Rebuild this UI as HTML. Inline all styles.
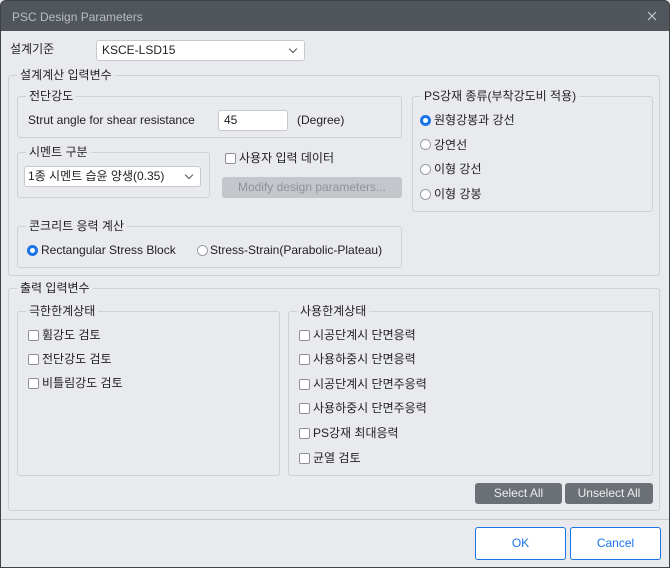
<!DOCTYPE html>
<html><head><meta charset="utf-8"><style>
*{box-sizing:border-box;margin:0;padding:0}
body{width:670px;height:568px;overflow:hidden;background:#e9eaed;font-family:"Liberation Sans","Noto Sans CJK KR",sans-serif;font-size:12px;color:#222;position:relative}
.a{position:absolute}
.win{position:absolute;left:0;top:0;width:670px;height:568px;border:1px solid #3d4247;border-radius:6px 6px 0 0}
.title{left:0;top:0;width:670px;height:31px;background:#50565c;border-radius:6px 6px 0 0}
.g{position:absolute;border:1px solid #cfd1d5;border-radius:3px}
.lg{position:absolute;top:-9px;left:8px;background:#e9eaed;padding:0 3px;line-height:16px;white-space:nowrap}
.sel{position:absolute;background:#fff;border:1px solid #c5c8cc;border-radius:3px;padding-left:5px;line-height:19px}
.sel.dd:after{content:"";position:absolute;right:8px;top:5px;width:5px;height:5px;border-right:1.5px solid #555;border-bottom:1.5px solid #555;transform:rotate(45deg)}
.t{position:absolute;white-space:nowrap;line-height:16px}
.cb{position:absolute;width:11px;height:11px;border:1px solid #8d9196;border-radius:2px;background:#fff}
.rd{position:absolute;width:11px;height:11px;border:1px solid #9a9ea3;border-radius:50%;background:#fff}
.rd.on{border:3px solid #1a73e8}
.btn{position:absolute;background:#6b7077;color:#eee;border-radius:3px;text-align:center;line-height:20px}
.ok{position:absolute;border:1px solid #1a73e8;color:#1a73e8;background:#fff;border-radius:3px;text-align:center;line-height:31px}
</style></head><body>
<div class="a title"></div>
<div class="t" style="left:12px;top:9px;color:#b9bdc1">PSC Design Parameters</div>
<svg class="a" style="left:647px;top:11px" width="10" height="10"><path d="M1 1L9 9M9 1L1 9" stroke="#c8cbce" stroke-width="1.2"/></svg>
<div class="t" style="left:10px;top:41px">설계기준</div>
<div class="sel dd" style="left:96px;top:40px;width:209px;height:21px">KSCE-LSD15</div>

<div class="g" style="left:8px;top:75px;width:652px;height:201px"><div class="lg">설계계산 입력변수</div></div>
<div class="g" style="left:17px;top:96px;width:385px;height:42px"><div class="lg">전단강도</div></div>
<div class="t" style="left:28px;top:112px">Strut angle for shear resistance</div>
<div class="sel" style="left:218px;top:110px;width:70px;height:21px;padding-left:5px">45</div>
<div class="t" style="left:297px;top:112px">(Degree)</div>

<div class="g" style="left:17px;top:152px;width:193px;height:46px"><div class="lg">시멘트 구분</div></div>
<div class="sel dd" style="left:24px;top:166px;width:177px;height:21px;padding-left:3px">1종 시멘트 습윤 양생(0.35)</div>
<div class="cb" style="left:225px;top:153px"></div>
<div class="t" style="left:239px;top:150px">사용자 입력 데이터</div>
<div class="btn" style="left:222px;top:177px;width:180px;height:21px;background:#c3c7cb;color:#8e9399">Modify design parameters...</div>

<div class="g" style="left:17px;top:226px;width:385px;height:42px"><div class="lg">콘크리트 응력 계산</div></div>
<div class="rd on" style="left:27px;top:245px"></div>
<div class="t" style="left:41px;top:242px">Rectangular Stress Block</div>
<div class="rd" style="left:197px;top:245px"></div>
<div class="t" style="left:210px;top:242px">Stress-Strain(Parabolic-Plateau)</div>

<div class="g" style="left:412px;top:96px;width:241px;height:116px"><div class="lg">PS강재 종류(부착강도비 적용)</div></div>
<div class="rd on" style="left:420px;top:115px"></div><div class="t" style="left:434px;top:112px">원형강봉과 강선</div>
<div class="rd" style="left:420px;top:139px"></div><div class="t" style="left:434px;top:137px">강연선</div>
<div class="rd" style="left:420px;top:164px"></div><div class="t" style="left:434px;top:161px">이형 강선</div>
<div class="rd" style="left:420px;top:189px"></div><div class="t" style="left:434px;top:186px">이형 강봉</div>

<div class="g" style="left:8px;top:288px;width:652px;height:223px"><div class="lg">출력 입력변수</div></div>
<div class="g" style="left:17px;top:311px;width:263px;height:165px"><div class="lg">극한한계상태</div></div>
<div class="cb" style="left:28px;top:330px"></div><div class="t" style="left:42px;top:327px">휨강도 검토</div>
<div class="cb" style="left:28px;top:354px"></div><div class="t" style="left:42px;top:351px">전단강도 검토</div>
<div class="cb" style="left:28px;top:378px"></div><div class="t" style="left:42px;top:375px">비틀림강도 검토</div>

<div class="g" style="left:288px;top:311px;width:365px;height:165px"><div class="lg">사용한계상태</div></div>
<div class="cb" style="left:299px;top:330px"></div><div class="t" style="left:313px;top:327px">시공단계시 단면응력</div>
<div class="cb" style="left:299px;top:354px"></div><div class="t" style="left:313px;top:351px">사용하중시 단면응력</div>
<div class="cb" style="left:299px;top:379px"></div><div class="t" style="left:313px;top:376px">시공단계시 단면주응력</div>
<div class="cb" style="left:299px;top:403px"></div><div class="t" style="left:313px;top:400px">사용하중시 단면주응력</div>
<div class="cb" style="left:299px;top:428px"></div><div class="t" style="left:313px;top:425px">PS강재 최대응력</div>
<div class="cb" style="left:299px;top:453px"></div><div class="t" style="left:313px;top:450px">균열 검토</div>

<div class="btn" style="left:475px;top:483px;width:87px;height:21px">Select All</div>
<div class="btn" style="left:565px;top:483px;width:88px;height:21px">Unselect All</div>
<div class="a" style="left:1px;top:519px;width:668px;height:1px;background:#c5c8cc"></div>
<div class="ok" style="left:475px;top:527px;width:91px;height:33px">OK</div>
<div class="ok" style="left:570px;top:527px;width:91px;height:33px">Cancel</div>
<div class="win"></div>
</body></html>
